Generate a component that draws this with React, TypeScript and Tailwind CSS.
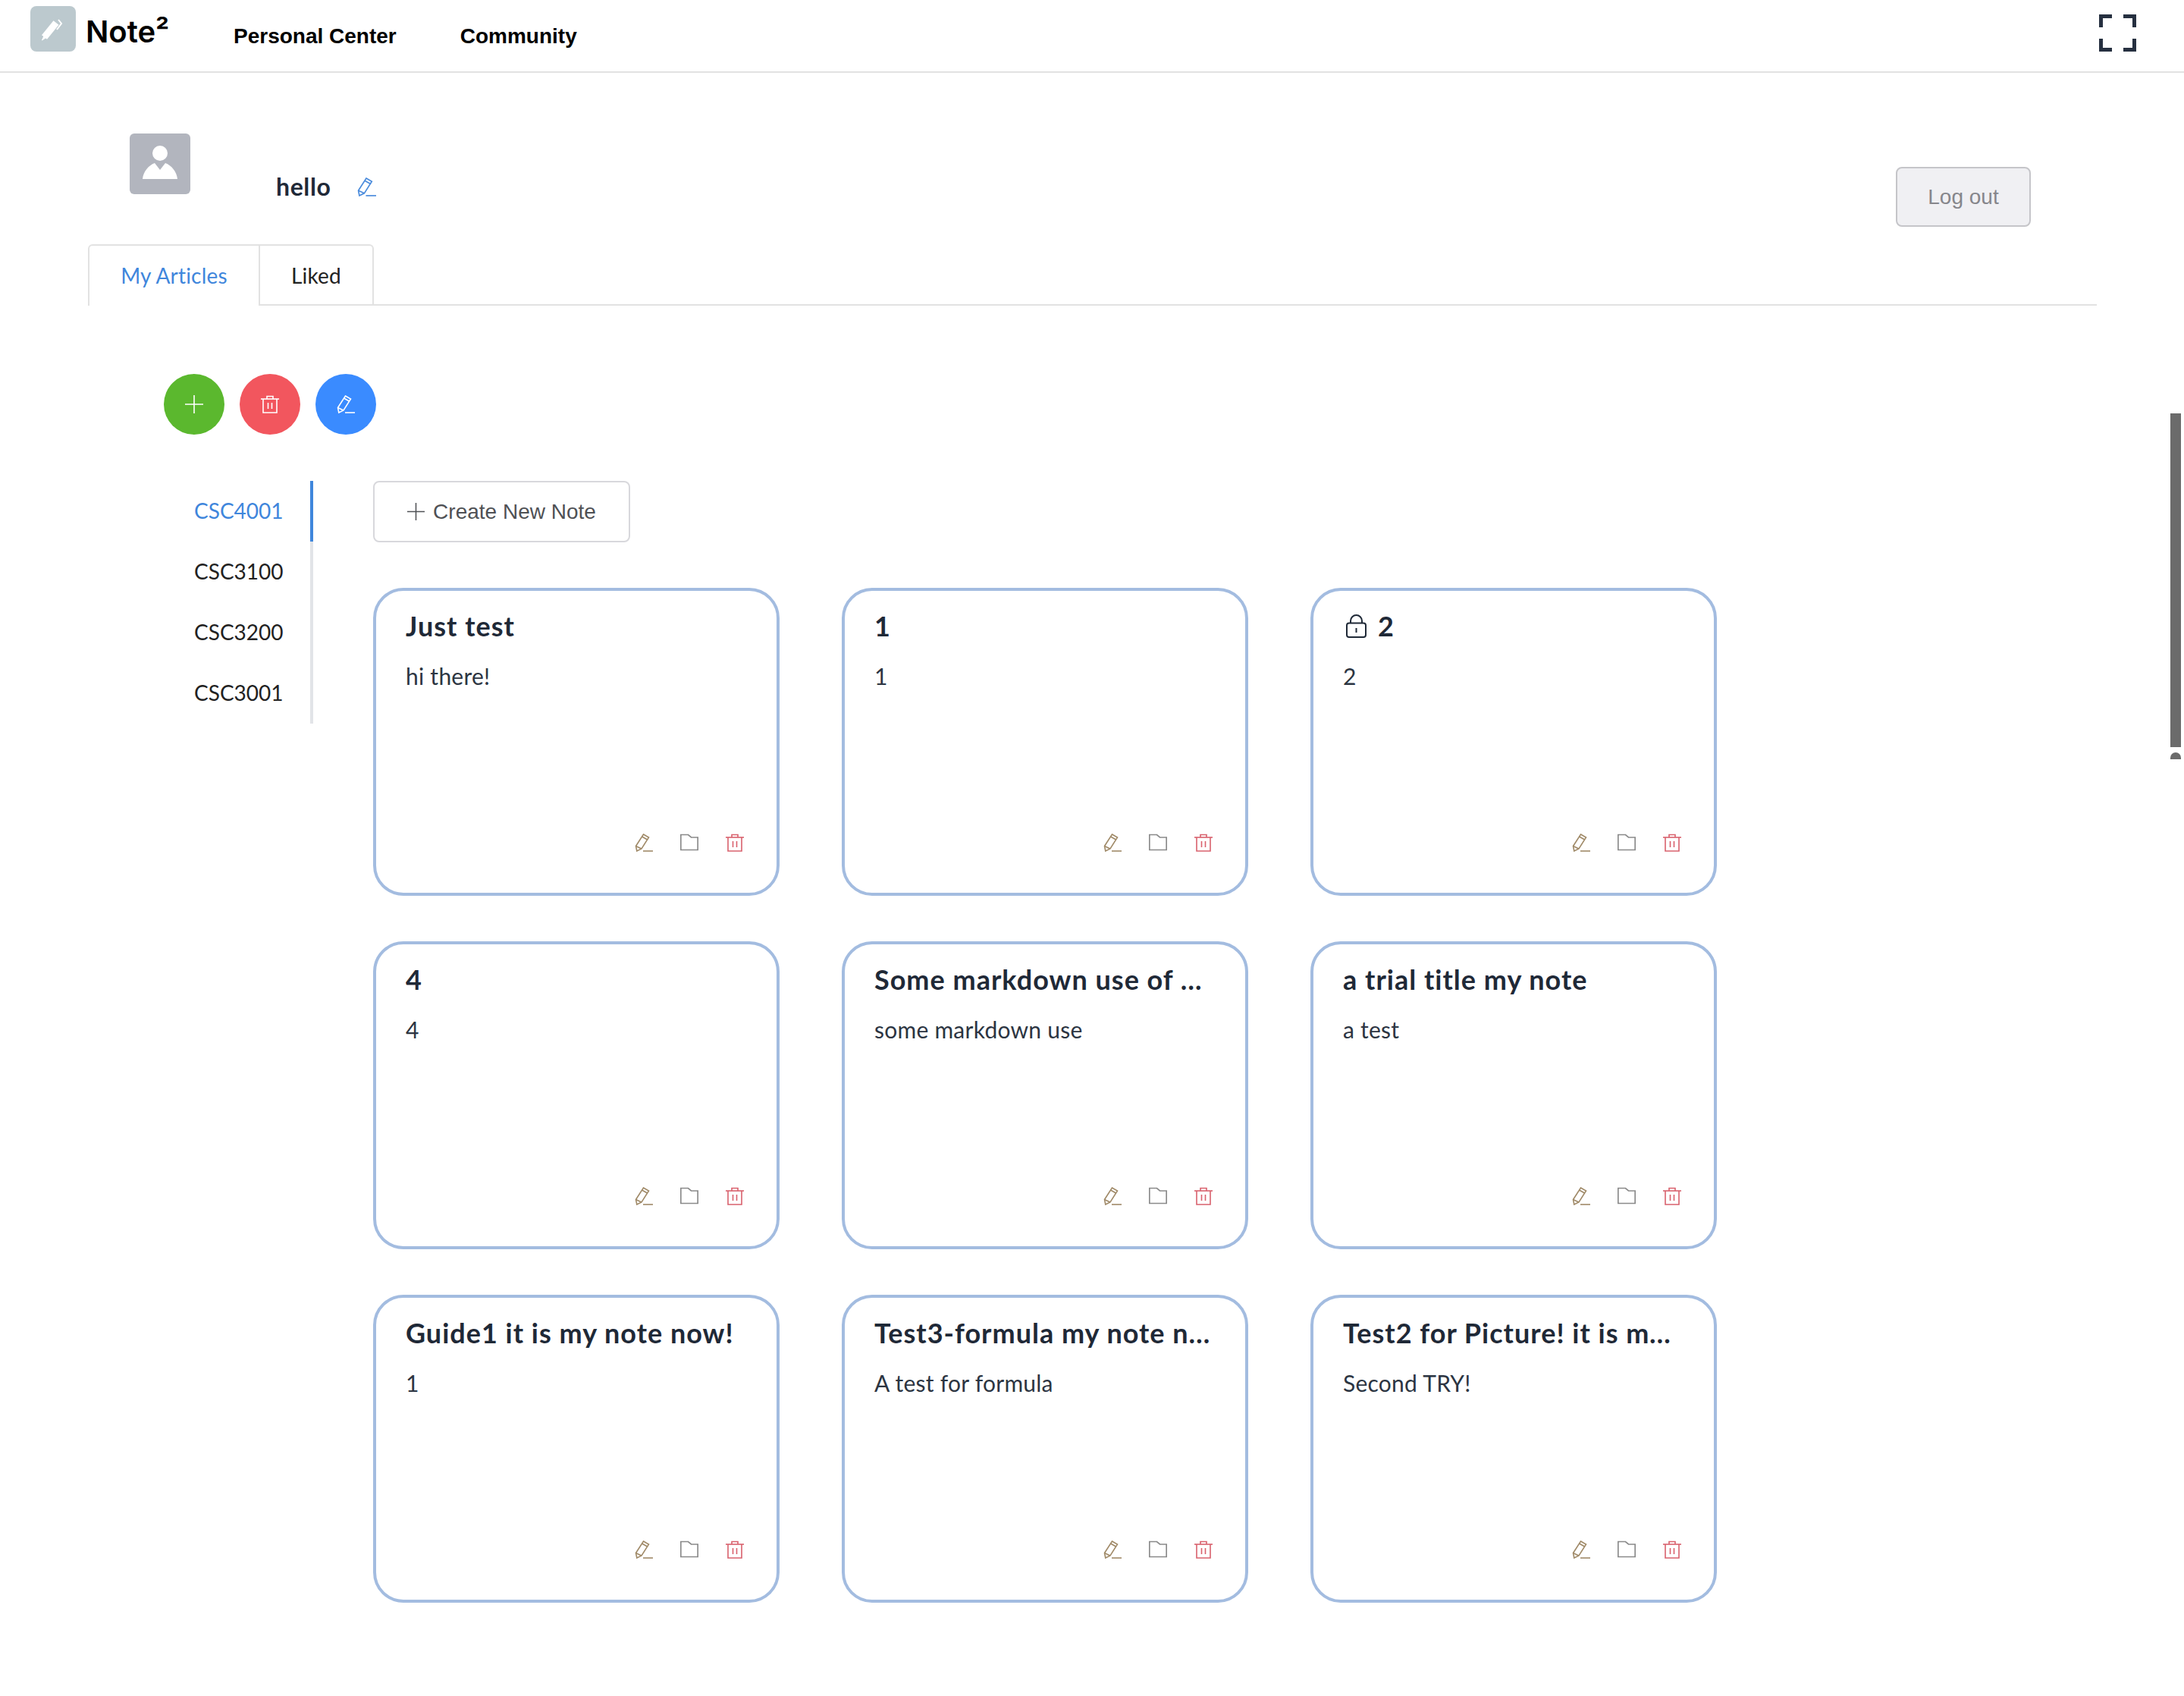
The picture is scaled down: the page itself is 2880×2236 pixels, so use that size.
const notes = [
    { title: "Just test", desc: "hi there!" },
    { title: "1", desc: "1" },
    { title: "2", desc: "2", locked: true },
    { title: "4", desc: "4" },
    { title: "Some markdown use of my note", desc: "some markdown use" },
    { title: "a trial title my note", desc: "a test" },
    { title: "Guide1 it is my note now!", desc: "1" },
    { title: "Test3-formula my note now!", desc: "A test for formula" },
    { title: "Test2 for Picture! it is my note now!", desc: "Second TRY!" },
]

const courses = ["CSC4001", "CSC3100", "CSC3200", "CSC3001"]

function PencilIcon({ className }: { className: string }) {
    return (
        <svg viewBox="0 0 24 24" fill="none" stroke="currentColor" strokeWidth="1.6" className={className}>
            <path d="M11.5 1 L18.5 5 L9 20 L2.8 23 L1.5 16.5 Z" />
            <path d="M9.6 4 L16.6 8" />
            <path d="M1.5 16.5 L9 20" />
            <path d="M11 23 H24" />
        </svg>
    )
}

function TrashIcon({ className }: { className: string }) {
    return (
        <svg viewBox="0 0 24 24" fill="none" stroke="currentColor" strokeWidth="1.6" className={className}>
            <path d="M0 5 H24" />
            <path d="M8 5 V1.5 H16 V5" />
            <path d="M3 5 V23 H21 V5" />
            <path d="M9.5 10 V18 M14.5 10 V18" />
        </svg>
    )
}

function FolderIcon({ className }: { className: string }) {
    return (
        <svg viewBox="0 0 24 24" fill="none" stroke="currentColor" strokeWidth="1.7" className={className}>
            <path d="M0.8 1.5 H10.5 L14.5 5 H23.2 V21.5 H0.8 Z" />
        </svg>
    )
}

function PlusIcon({ className }: { className: string }) {
    return (
        <svg viewBox="0 0 24 24" fill="none" stroke="currentColor" strokeWidth="1.6" className={className}>
            <path d="M12 0 V24 M0 12 H24" />
        </svg>
    )
}

function LockIcon() {
    return (
        <svg viewBox="0 0 27 31" fill="none" stroke="currentColor" strokeWidth="2" className="ml-[4px] w-[27px] h-[31px] shrink-0 text-[#1f2937]">
            <rect x="1" y="11.5" width="25" height="18.5" rx="3" />
            <path d="M6 11.5 V8.5 a7.5 7.5 0 0 1 15 0 V11.5" />
            <path d="M13.5 18 V24" />
        </svg>
    )
}

function NoteCard({ title, desc, locked }: { title: string, desc: string, locked?: boolean }) {
    return (
        <div className="h-[406px] border-4 border-[#a3bce0] rounded-[40px] bg-white px-[39px] pt-[24px] pb-[54px] flex flex-col">
            <div className="flex items-center gap-[15px] h-[44px]">
                {locked && <LockIcon />}
                <h3 className="text-[36px] leading-[44px] font-bold tracking-[1px] text-[#1f2937] truncate">{title}</h3>
            </div>
            <p className="mt-[24px] text-[30px] leading-[40px] tracking-[0.25px] text-[#2c3542]">{desc}</p>
            <div className="mt-auto mr-[4px] flex justify-end gap-[36px]">
                <PencilIcon className="w-6 h-6 text-[#a08a68]" />
                <FolderIcon className="w-6 h-6 text-[#8a8a8a]" />
                <TrashIcon className="w-6 h-6 text-[#d9616d]" />
            </div>
        </div>
    )
}

export default function App() {
    return (
        <div className="relative min-h-[2236px] bg-white font-['Lato',sans-serif] text-[#1f2937]">
            <header className="h-[96px] border-b-2 border-[#e2e2e2] flex items-start pl-10 pr-[63px]">
                <div className="mt-2 w-[60px] h-[60px] rounded-lg bg-[#bcc9ce] flex items-center justify-center">
                    <svg viewBox="0 0 60 60" fill="none" stroke="white" className="w-[60px] h-[60px]">
                        <path d="M18.5 41 L34 22" strokeWidth="9" />
                        <path d="M15.5 45 L19 37 L23 40 Z" fill="white" strokeWidth="1" />
                        <path d="M37 18 L41 23 L35 31" strokeWidth="2" />
                    </svg>
                </div>
                <span className="ml-[13px] mt-[14px] w-[113px] whitespace-nowrap font-['Inter',sans-serif] text-[40px] leading-[56px] font-semibold text-black">Note²</span>
                <nav className="ml-[82px] mt-[28px] flex gap-[84px] font-['Liberation_Sans',sans-serif] text-[28px] leading-[40px] font-bold text-black">
                    <a>Personal Center</a>
                    <a>Community</a>
                </nav>
                <svg viewBox="0 0 49 49" fill="none" stroke="#263040" strokeWidth="5" className="ml-auto mt-[19px] w-[49px] h-[49px]">
                    <path d="M2.5 17 V2.5 H17 M32 2.5 H46.5 V17 M2.5 32 V46.5 H17 M32 46.5 H46.5 V32" />
                </svg>
            </header>

            <section className="h-[226px] pt-[80px] flex items-start pl-[171px] pr-[202px]">
                <div className="w-[80px] h-[80px] rounded-md bg-[#b2b5be]">
                    <svg viewBox="0 0 80 80" fill="white" className="w-[80px] h-[80px]">
                        <circle cx="40" cy="26" r="10" />
                        <path d="M17 60 C18 50 25 42 33 39 L40 48 L47 39 C55 42 62 50 63 60 Z" />
                    </svg>
                </div>
                <div className="ml-[113px] mt-[50px] flex items-center gap-[35px]">
                    <span className="text-[32px] leading-[40px] font-bold tracking-[0.6px]">hello</span>
                    <PencilIcon className="w-[25px] h-[25px] text-[#4a8bdc]" />
                </div>
                <button className="ml-auto mt-[44px] w-[178px] h-[79px] rounded-lg border-2 border-[#c5c5c9] bg-[#f0f0f3] font-['Liberation_Sans',sans-serif] text-[28px] text-[#86868b]">
                    Log out
                </button>
            </section>

            <div className="ml-[116px] w-[2649px] h-[81px] border-b-2 border-[#e2e2e2] flex text-[28px] tracking-[0.2px]">
                <div className="-mb-[2px] w-[227px] h-[81px] border-2 border-b-0 border-[#e2e2e2] rounded-tl-md bg-white flex items-center justify-center pb-[2px] text-[#3f86dc]">
                    My Articles
                </div>
                <div className="w-[150px] h-[79px] border-2 border-l-0 border-b-0 border-[#e2e2e2] rounded-tr-md flex items-center justify-center text-[#222]">
                    Liked
                </div>
            </div>

            <div className="mt-[90px] ml-[216px] flex gap-5">
                <button className="w-20 h-20 rounded-full bg-[#5bb82e] flex items-center justify-center text-white">
                    <PlusIcon className="w-6 h-6" />
                </button>
                <button className="w-20 h-20 rounded-full bg-[#f2565e] flex items-center justify-center text-white">
                    <TrashIcon className="w-6 h-6" />
                </button>
                <button className="w-20 h-20 rounded-full bg-[#3a8bff] flex items-center justify-center text-white">
                    <PencilIcon className="w-6 h-6" />
                </button>
            </div>

            <div className="mt-[61px] ml-[216px] flex items-start">
                <aside className="w-[197px] shrink-0 text-[28px]">
                    {courses.map((c, i) => (
                        <div
                            key={c}
                            className={i === 0
                                ? "h-20 pl-10 pb-[2px] flex items-center border-r-4 border-[#3f86dc] text-[#3f86dc]"
                                : "h-20 pl-10 pb-[2px] flex items-center border-r-4 border-[#e2e4e8] text-[#222]"}
                        >
                            {c}
                        </div>
                    ))}
                </aside>
                <main className="ml-[79px]">
                    <button className="w-[339px] h-[81px] rounded-lg border-2 border-[#d8d8dc] bg-white flex items-center justify-center gap-[11px] font-['Liberation_Sans',sans-serif] text-[28px] text-[#4f5155]">
                        <PlusIcon className="w-[23px] h-[23px]" />
                        Create New Note
                    </button>
                    <div className="mt-[60px] grid grid-cols-[repeat(3,536px)] gap-x-[82px] gap-y-[60px]">
                        {notes.map((n) => (
                            <NoteCard key={n.title} title={n.title} desc={n.desc} locked={n.locked} />
                        ))}
                    </div>
                </main>
            </div>

            {/* scrollbar thumb from the capture */}
            <div className="absolute left-[2862px] top-[545px] w-[14px] h-[440px] bg-[#6b6b6b]" />
            <div className="absolute left-[2862px] top-[992px] w-[14px] h-[9px] rounded-t-full bg-[#6b6b6b]" />
        </div>
    )
}
